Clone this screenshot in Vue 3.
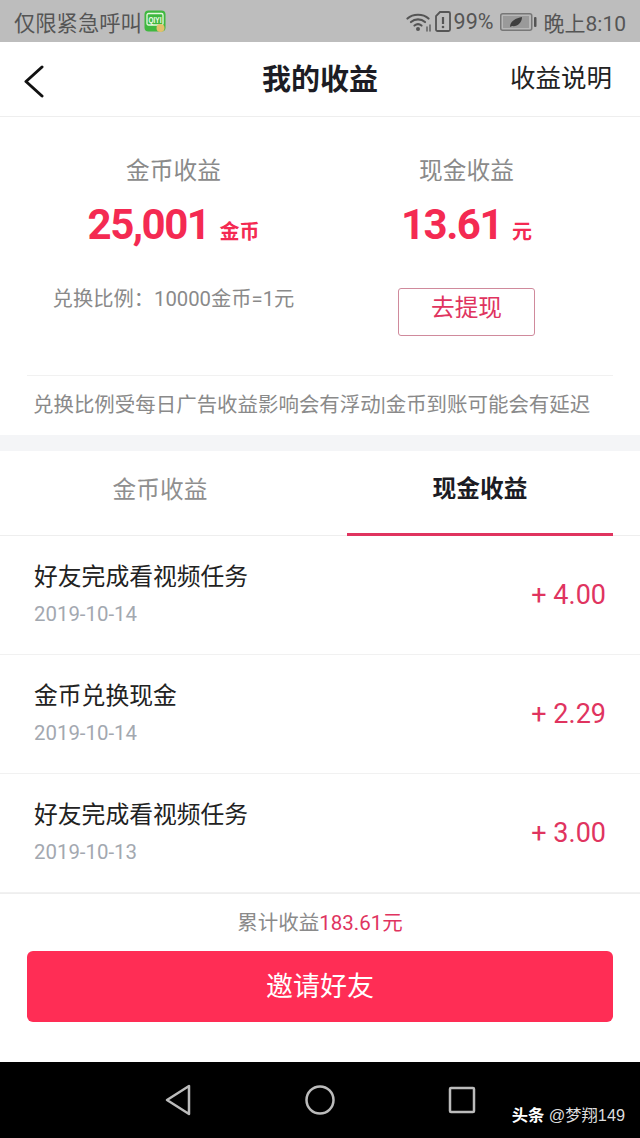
<script setup>
const rows = [
  { title: '好友完成看视频任务', date: '2019-10-14', amount: '+ 4.00' },
  { title: '金币兑换现金', date: '2019-10-14', amount: '+ 2.29' },
  { title: '好友完成看视频任务', date: '2019-10-13', amount: '+ 3.00' },
]
</script>

<template>
  <div class="page">
    <div class="status">
      <div class="status-left">
        <span class="emergency">仅限紧急呼叫</span>
        <svg class="iqiyi" width="22" height="22" viewBox="0 0 22 22">
          <rect x="0.500" y="0.500" width="21" height="21" rx="4" fill="#3fb83f" />
          <rect x="3" y="3.500" width="16" height="11.500" rx="1.500" fill="none" stroke="#e8f7e0" stroke-width="1.300" />
          <text x="11" y="12.800" text-anchor="middle" font-size="8.500" font-weight="700" fill="#f2fbec" font-family="Liberation Sans, sans-serif" textLength="13" lengthAdjust="spacingAndGlyphs">QIYI</text>
          <circle cx="16.500" cy="18" r="4" fill="#e3c06c" />
        </svg>
      </div>
      <div class="status-right">
        <svg width="26" height="22" viewBox="0 0 26 22" fill="none" stroke="#555" stroke-width="2.200" stroke-linecap="round">
          <path d="M1.500 7.500C7 2.500 17 2.500 22.500 7.500" />
          <path d="M5 11c4-3.500 10-3.500 14 0" />
          <path d="M8.500 14.500c2-1.600 5-1.600 7 0" />
          <circle cx="12" cy="18" r="2" fill="#555" stroke="none" />
          <path d="M21 16v4M24 14v6" stroke-width="1.300" />
        </svg>
        <svg class="sim" width="16" height="21" viewBox="0 0 16 21" fill="none" stroke="#555" stroke-width="1.800">
          <path d="M5 1h8.500a1.500 1.500 0 0 1 1.500 1.500v16a1.500 1.500 0 0 1-1.500 1.500h-11A1.500 1.500 0 0 1 1 18.500V5z" />
          <path d="M8 6v7" stroke-width="2.200" />
          <circle cx="8" cy="16" r="1.300" fill="#555" stroke="none" />
        </svg>
        <span class="pct">99%</span>
        <svg class="battery" width="37" height="18" viewBox="0 0 37 18">
          <rect x="0.750" y="0.750" width="31" height="16.500" rx="2" fill="#b8b8b8" stroke="#777" stroke-width="1.500" />
          <rect x="3" y="3" width="26" height="12" fill="#9a9a9a" />
          <rect x="34" y="4" width="2.500" height="10" rx="1" fill="#555" />
          <path d="M10 14c0-6 6-9 12-10 0 6-5 10-10 9z" fill="#3f3f3f" />
        </svg>
        <span class="time">晚上8:10</span>
      </div>
    </div>

    <header class="header">
      <svg class="back" width="20" height="33" viewBox="0 0 20 33" fill="none" stroke="#111" stroke-width="3" stroke-linecap="round" stroke-linejoin="round">
        <path d="M18 2 2 16.500 18 31" />
      </svg>
      <h1>我的收益</h1>
      <span class="explain">收益说明</span>
    </header>

    <section class="summary">
      <div class="columns">
        <div class="col">
          <div class="label">金币收益</div>
          <div class="value"><b>25,001</b><em>金币</em></div>
          <div class="ratio">兑换比例：10000金币=1元</div>
        </div>
        <div class="col">
          <div class="label">现金收益</div>
          <div class="value"><b>13.61</b><em>元</em></div>
          <button class="withdraw">去提现</button>
        </div>
      </div>
      <p class="note">兑换比例受每日广告收益影响会有浮动|金币到账可能会有延迟</p>
    </section>

    <div class="band"></div>

    <nav class="tabs">
      <div class="tab">金币收益</div>
      <div class="tab active">现金收益</div>
    </nav>

    <ul class="list">
      <li v-for="(r, i) in rows" :key="i" class="row">
        <div>
          <div class="title">{{ r.title }}</div>
          <div class="date">{{ r.date }}</div>
        </div>
        <div class="amount">{{ r.amount }}</div>
      </li>
    </ul>

    <footer class="footer">
      <div class="total">累计收益<span>183.61元</span></div>
      <button class="invite">邀请好友</button>
    </footer>

    <div class="nav">
      <svg width="28" height="32" viewBox="0 0 28 32" fill="none" stroke="#bbb" stroke-width="2.500" stroke-linejoin="round">
        <path d="M25 2v28L3 16z" />
      </svg>
      <svg width="30" height="30" viewBox="0 0 30 30" fill="none" stroke="#bbb" stroke-width="2.500">
        <circle cx="15" cy="15" r="13.500" />
      </svg>
      <svg width="28" height="28" viewBox="0 0 28 28" fill="none" stroke="#bbb" stroke-width="2.500" stroke-linejoin="round">
        <rect x="2" y="2" width="24" height="24" rx="1" />
      </svg>
      <span class="mark"><b>头条</b> @梦翔149</span>
    </div>
  </div>
</template>

<style scoped>
.page {
  width: 640px;
  height: 1138px;
  display: flex;
  flex-direction: column;
  background: #fff;
  overflow: hidden;
  font-family: "Roboto", "Noto Sans CJK SC", sans-serif;
  color: #222;
}
.status {
  height: 42px;
  flex: none;
  background: #bdbdbd;
  display: flex;
  align-items: center;
  justify-content: space-between;
  padding: 0 14px 0 14px;
  color: #555;
  font-size: 21px;
}
.status-left,
.status-right {
  display: flex;
  align-items: center;
}
.emergency { font-size: 21.300px; }
.iqiyi { margin-left: 2px; }
.status-right { padding-top: 1px; }
.status-right svg { flex: none; }
.sim { margin-left: 3px; }
.pct { margin-left: 3px; font-size: 21.500px; }
.battery { margin-left: 6px; }
.time { margin-left: 7px; }
.header {
  height: 75px;
  flex: none;
  box-sizing: border-box;
  border-bottom: 1px solid #eeeeee;
  position: relative;
  display: flex;
  align-items: center;
  justify-content: space-between;
  padding: 0 28px 4px 24px;
}
.header h1 {
  position: absolute;
  left: 0;
  right: 0;
  margin: 0;
  text-align: center;
  font-size: 29px;
  font-weight: 700;
  color: #1c1c24;
}
.back { margin-top: 9px; }
.explain { font-size: 25.500px; color: #222; margin-bottom: 3px; }
.summary {
  height: 318px;
  flex: none;
  box-sizing: border-box;
  padding: 0 27px;
  display: flex;
  flex-direction: column;
}
.columns {
  display: grid;
  grid-template-columns: 1fr 1fr;
  height: 258px;
  border-bottom: 1px solid #f1f1f1;
}
.col {
  display: flex;
  flex-direction: column;
  align-items: center;
  padding-top: 36px;
}
.label {
  font-size: 23.700px;
  line-height: 36px;
  color: #8a8a8a;
}
.value {
  display: flex;
  align-items: baseline;
  height: 54px;
  line-height: 54px;
  margin-top: 9px;
  color: #f42a52;
}
.value b { font-size: 42px; font-weight: 700; letter-spacing: -1.500px; }
.value em {
  font-style: normal;
  font-weight: 700;
  font-size: 20px;
  margin-left: 10px;
}
.ratio {
  margin-top: 33px;
  font-size: 20.300px;
  line-height: 28px;
  color: #8a8a8a;
}
.withdraw {
  margin-top: 36px;
  width: 137px;
  height: 48px;
  box-sizing: border-box;
  border: 1px solid #d08a9c;
  border-radius: 3px;
  background: #fff;
  color: #e0345f;
  font: inherit;
  font-size: 23.700px;
  padding: 0 0 12px;
}
.note {
  margin: 14px 0 0 6px;
  font-size: 20.470px;
  line-height: 30px;
  color: #8a8a8a;
  white-space: nowrap;
}
.band {
  height: 16px;
  flex: none;
  background: #f4f5f7;
}
.tabs {
  height: 85px;
  flex: none;
  box-sizing: border-box;
  display: grid;
  grid-template-columns: 320px 320px;
  border-bottom: 1px solid #eeeeee;
}
.tab {
  display: flex;
  align-items: center;
  justify-content: center;
  box-sizing: border-box;
  padding-bottom: 10px;
  font-size: 23.700px;
  color: #8f8f8f;
}
.tab.active {
  margin: 0 27px -1px;
  font-weight: 700;
  color: #1c1c24;
  border-bottom: 3px solid #e0345f;
}
.list {
  list-style: none;
  margin: 0;
  padding: 0;
  flex: 1;
}
.row {
  height: 119px;
  box-sizing: border-box;
  border-bottom: 1px solid #f1f1f1;
  padding: 23px 34px 0 34px;
  display: flex;
  justify-content: space-between;
}
.title {
  font-size: 23.800px;
  line-height: 36px;
  color: #222;
}
.date {
  margin-top: 2px;
  font-size: 20.400px;
  line-height: 34px;
  color: #a3a8b0;
}
.amount {
  font-size: 27px;
  line-height: 36px;
  margin-top: 18px;
  color: #e0345f;
}
.footer {
  height: 169px;
  flex: none;
  box-sizing: border-box;
  border-top: 1px solid #eeeeee;
  padding: 14px 27px 0;
  display: flex;
  flex-direction: column;
  align-items: center;
}
.total {
  font-size: 20.500px;
  line-height: 30px;
  color: #8a8a8a;
}
.total span { color: #e0345f; }
.invite {
  margin-top: 13px;
  width: 586px;
  height: 71px;
  border: none;
  border-radius: 6px;
  background: #ff2d55;
  color: #fff;
  font: inherit;
  font-size: 27px;
  padding: 0 0 4px;
}
.nav {
  height: 76px;
  flex: none;
  background: #000;
  position: relative;
  display: flex;
  align-items: center;
  padding-left: 164px;
  gap: 0;
}
.nav svg:nth-child(2) { margin-left: 113px; }
.nav svg:nth-child(3) { margin-left: 113px; }
.mark {
  position: absolute;
  right: 15px;
  bottom: 13px;
  color: #ddd;
  font-size: 16.300px;
  line-height: 20px;
  font-family: "Liberation Sans", "Noto Sans CJK SC", sans-serif;
}
.mark b { color: #fff; font-weight: 700; }
</style>
